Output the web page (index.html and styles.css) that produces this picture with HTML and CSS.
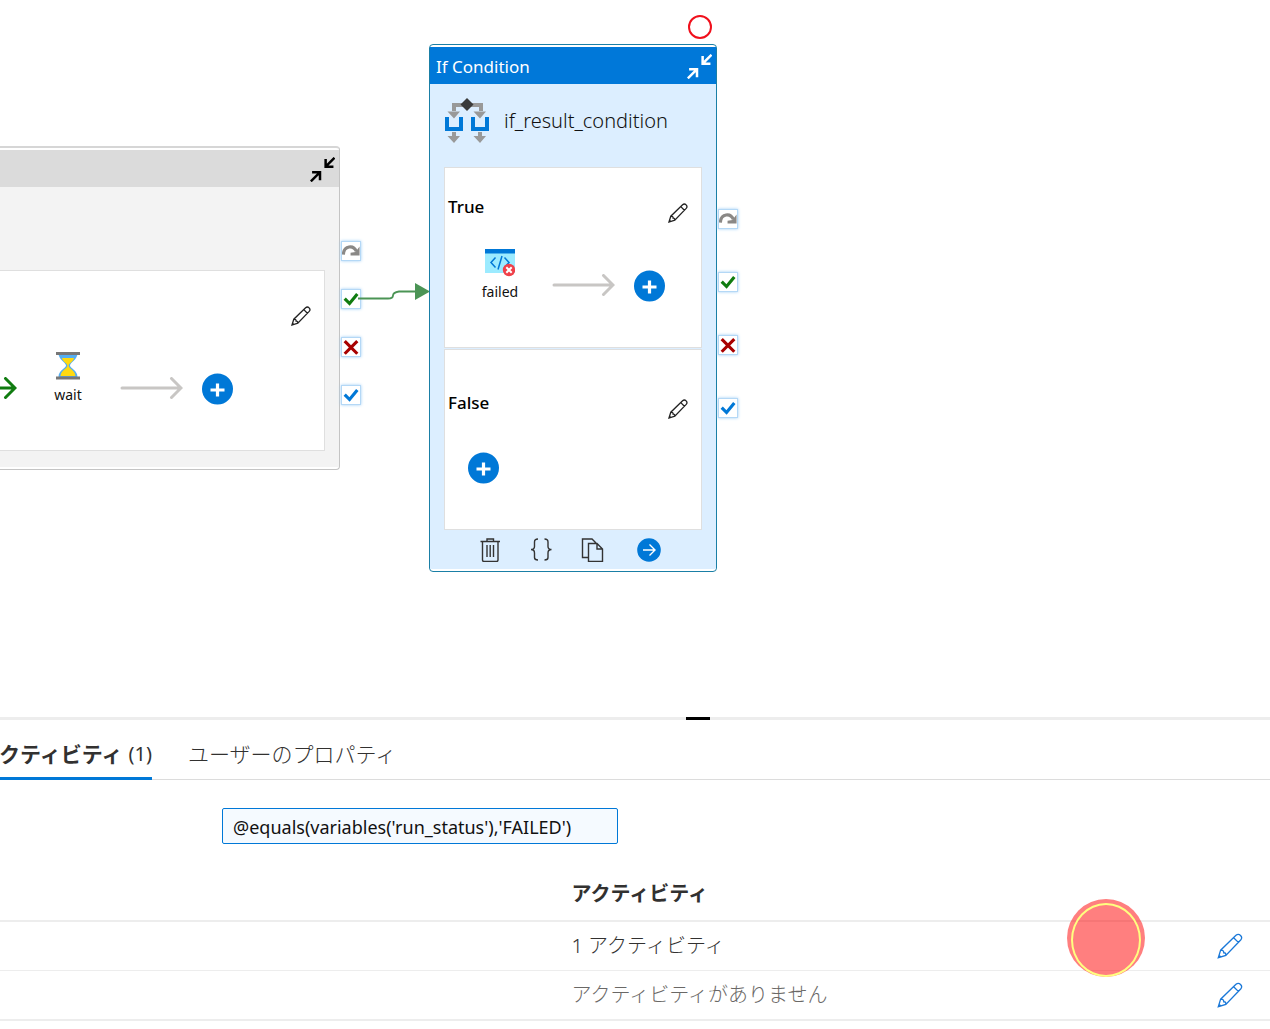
FILE: index.html
```html
<!DOCTYPE html>
<html lang="ja">
<head>
<meta charset="utf-8">
<meta name="viewport" content="width=device-width, initial-scale=1">
<title>if_result_condition</title>
<link rel="stylesheet" href="styles.css">
</head>
<body>
<svg class="symbols" aria-hidden="true">
  <symbol id="pencil" viewBox="0 0 20 20"><path d="M1 19 2.8 13.2 14.6 1.8Q16.4.2 18.1 1.9T18.2 5.4L6.8 17.2ZM2.8 13.2Q5.3 13.2 5.2 15.2 6.9 15 6.8 17.2M12.8 3.6 16.4 7.2M1 19 2.6 17.4"/></symbol>
  <symbol id="collapse" viewBox="0 0 24 24"><path d="M23.5.8 15 9.2M15 1.8V9.4H22.5M.8 23.4 9.2 15M2 14.6H9.6V22.4"/></symbol>
  <symbol id="plus" viewBox="0 0 32 32"><circle cx="15.500" cy="16" r="15.500" fill="#0078d7"/><path d="M15.500 10.500V23.500M8.500 17H22.500" stroke="#fff" stroke-width="3.2"/></symbol>
  <symbol id="arrow" viewBox="0 0 64 24"><path d="M3 11H61M52.5 1.5 62 11 52.5 20.5"/></symbol>
  <symbol id="skip" viewBox="0 0 20 20"><path d="M1.500 14C2 3.500 13 3 16 10.500" fill="none" stroke="#8a8886" stroke-width="3.500"/><path d="M19.500 5V15H9.500V12L15 11Z" fill="#8a8886"/></symbol>
  <symbol id="tick" viewBox="0 0 20 20"><path d="M3 9.500 8.400 15 17 4.500" fill="none" stroke-width="3.500"/></symbol>
  <symbol id="cross" viewBox="0 0 20 20"><path d="M3 3.500 17 17.500M17 3.500 3 17.500" fill="none" stroke="#a80000" stroke-width="3.500"/></symbol>
</svg>

<main class="canvas">
  <section class="node node-loop">
    <header class="node-head">
      <button class="icon-button" aria-label="折りたたむ"><svg class="collapse"><use href="#collapse"/></svg></button>
    </header>
    <div class="node-title"></div>
    <div class="branches">
      <div class="branch">
        <div class="branch-head">
          <button class="icon-button edit" aria-label="編集"><svg class="pencil"><use href="#pencil"/></svg></button>
        </div>
        <div class="steps steps-end">
          <svg class="arrow arrow-success"><use href="#arrow"/></svg>
          <div class="activity">
            <svg class="activity-icon" viewBox="0 2 30 30"><path d="M5.500 3H24.500C24.500 10 17 12.500 17 15.500S24.500 20 24.500 27H5.500C5.500 20 13 18.500 13 15.500S5.500 10 5.500 3Z" fill="#55aef2"/><path d="M9 8H21C20.500 11.500 16 13 15.600 15.500 15.700 19 22 20 22.500 26H7.500C8 20 14.300 19 14.400 15.500 14 13 9.500 11.500 9 8Z" fill="#ffd90f"/><path d="M3 3.500H27M3 28H27" stroke="#777" stroke-width="3"/></svg>
            <span>wait</span>
          </div>
          <svg class="arrow"><use href="#arrow"/></svg>
          <button class="icon-button" aria-label="追加"><svg class="plus"><use href="#plus"/></svg></button>
        </div>
      </div>
    </div>
    <div class="handles">
      <svg class="handle"><use href="#skip"/></svg>
      <svg class="handle success"><use href="#tick"/></svg>
      <svg class="handle"><use href="#cross"/></svg>
      <svg class="handle completion"><use href="#tick"/></svg>
    </div>
  </section>

  <svg class="connector" viewBox="0 0 72 20"><path d="M0 16.500H30Q35 16.500 35 13.500T41 9.500H58" fill="none" stroke="#4b9455" stroke-width="1.800"/><path d="M57 1V18L72 9.500Z" fill="#4b9455"/></svg>

  <section class="node node-if">
    <header class="node-head">
      <span>If Condition</span>
      <button class="icon-button" aria-label="折りたたむ"><svg class="collapse"><use href="#collapse"/></svg></button>
    </header>
    <div class="node-title">
      <svg class="if-icon" viewBox="0 0 44 46"><path d="M9 13V7H36V13" fill="none" stroke="#999" stroke-width="4"/><path d="M2.500 13.500H15L9 20.500ZM28.500 13.500H41L35 20.500ZM7 34H11V38H15L9 45 2.500 38H7ZM33 34H37V38H41L35 45 28.500 38H33Z" fill="#999"/><path d="M2 19V31H16V19M28 19V31H42V19" fill="none" stroke="#0078d7" stroke-width="4"/><path d="M22 0 28.500 6.500 22 13 15.500 6.500Z" fill="#3a3a3a"/></svg>
      <span>if_result_condition</span>
    </div>
    <div class="branches">
      <div class="branch">
        <div class="branch-head">
          <span>True</span>
          <button class="icon-button edit" aria-label="編集"><svg class="pencil"><use href="#pencil"/></svg></button>
        </div>
        <div class="steps">
          <div class="activity">
            <svg class="activity-icon" viewBox="0 0 30 30"><path d="M0 4H30V24H0Z" fill="#9cebff"/><path d="M0 0H30V4.500H0Z" fill="#0078d7"/><path d="M10.500 8.500 6 13.500 10.500 18.500M19.500 8.500 24 13.500 19.500 18.500M17 7 13 20.500" fill="none" stroke="#0078d7" stroke-width="1.500"/><circle cx="24" cy="21" r="6.200" fill="#f04049"/><path d="M21.300 18.300 26.700 23.700M26.700 18.300 21.300 23.700" stroke="#fff" stroke-width="2"/></svg>
            <span>failed</span>
          </div>
          <svg class="arrow"><use href="#arrow"/></svg>
          <button class="icon-button" aria-label="追加"><svg class="plus"><use href="#plus"/></svg></button>
        </div>
      </div>
      <div class="branch branch-false">
        <div class="branch-head">
          <span>False</span>
          <button class="icon-button edit" aria-label="編集"><svg class="pencil"><use href="#pencil"/></svg></button>
        </div>
        <div class="steps">
          <button class="icon-button" aria-label="追加"><svg class="plus"><use href="#plus"/></svg></button>
        </div>
      </div>
    </div>
    <footer class="actions">
      <button class="icon-button" aria-label="削除"><svg class="action" viewBox="0 0 24 24"><path d="M2.500 3.500H22M9 3.500V1H15.500V3.500M4.500 3.500V22Q4.500 23.500 6 23.500H18.500Q20 23.500 20 22V3.500M9 7V19M12.200 7V19M15.500 7V19"/></svg></button>
      <button class="icon-button" aria-label="コード"><svg class="action" viewBox="0 0 24 24"><path d="M9 1Q5.500 1 5.500 4V8.500Q5.500 11.500 2 11.500 5.500 11.500 5.500 15V19.500Q5.500 22 9 22M15.500 1Q19 1 19 4V8.500Q19 11.500 22.500 11.500 19 11.500 19 15V19.500Q19 22 15.500 22"/></svg></button>
      <button class="icon-button" aria-label="複製"><svg class="action" viewBox="0 0 24 24"><path d="M8.500 19.500H2.500V1H12L16 5M8.500 5.500H17L22.500 11V23.500H8.500ZM17 5.500V11H22.500"/></svg></button>
      <button class="icon-button go" aria-label="出力の追加"><svg class="action" viewBox="0 0 24 24"><circle cx="12" cy="12" r="11.800" fill="#0078d7" stroke="none"/><path d="M6 12H18M12.500 6.500 18 12 12.500 17.500" stroke="#fff"/></svg></button>
    </footer>
    <div class="handles">
      <svg class="handle"><use href="#skip"/></svg>
      <svg class="handle success"><use href="#tick"/></svg>
      <svg class="handle"><use href="#cross"/></svg>
      <svg class="handle completion"><use href="#tick"/></svg>
    </div>
    <span class="breakpoint"></span>
  </section>
</main>

<section class="panel">
  <div class="splitter"><div class="grip"></div></div>
  <nav class="tabs">
    <a class="tab active" href="#activities">アクティビティ <span class="count">(1)</span></a>
    <a class="tab" href="#properties">ユーザーのプロパティ</a>
  </nav>
  <div class="expression">
    <input type="text" aria-label="式" value="@equals(variables('run_status'),'FAILED')">
  </div>
  <table class="cases" id="activities">
    <thead>
      <tr><th class="case"></th><th>アクティビティ</th><th class="tools"></th></tr>
    </thead>
    <tbody>
      <tr><td></td><td>1 アクティビティ</td><td><button class="icon-button" aria-label="編集"><svg class="pencil pencil-blue"><use href="#pencil"/></svg></button></td></tr>
      <tr><td></td><td class="muted">アクティビティがありません</td><td><button class="icon-button" aria-label="編集"><svg class="pencil pencil-blue"><use href="#pencil"/></svg></button></td></tr>
    </tbody>
  </table>
  <div class="click-marker"></div>
</section>
</body>
</html>
```
FILE: styles.css
```css
* { box-sizing: border-box; }

body {
  margin: 0;
  min-height: 100vh;
  display: flex;
  flex-direction: column;
  overflow-x: hidden;
  background: #fff;
  color: #323130;
  font: 20px/24px "Noto Sans", "Noto Sans CJK JP", sans-serif;
}

svg { display: block; flex: none; }
.symbols { position: absolute; width: 0; height: 0; }

.icon-button {
  display: block;
  padding: 0;
  border: 0;
  background: none;
  color: inherit;
  cursor: pointer;
}

/* Canvas */
.canvas {
  position: relative;
  flex: 1;
  min-height: 600px;
  overflow: hidden;
  color: #111;
}

.node {
  position: absolute;
  padding: 2px 0;
  border: 1px solid #1a7fa6;
  border-radius: 4px;
  background: #fff;
}
.node-loop {
  top: 146px;
  left: -260px;
  width: 600px;
  border: 1px solid #c4c4c4;
  border-top: 2px solid #d6d6d6;
}
.node-if { top: 44px; left: 429px; width: 288px; }

.node-head {
  display: flex;
  align-items: center;
  justify-content: space-between;
  height: 37px;
  padding: 2px 4px 0 6px;
  background: #0078d9;
  color: #fff;
  font-size: 17px;
}
.node-head .icon-button { margin-left: auto; }
.node-loop .node-head { background: #dbdbdb; color: #000; }

.node-title {
  display: flex;
  align-items: center;
  gap: 15px;
  height: 83px;
  padding: 0 15px 9px;
  background: #dceeff;
  font-weight: 300;
}
.node-loop .node-title { background: #f3f3f3; }

.branches {
  display: grid;
  gap: 1px;
  padding: 0 14px;
  background: #dceeff;
}
.node-loop .branches { padding-bottom: 16px; background: #f3f3f3; }

.branch { height: 181px; border: 1px solid #dfdfdf; background: #fff; }
.branch-head {
  display: flex;
  align-items: flex-start;
  height: 67px;
  padding: 27px 13px 0 3px;
  color: #000;
  font-size: 17px;
  font-weight: 500;
}
.branch-false .branch-head { padding-top: 41px; }
.edit { margin: 8px 0 0 auto; }

.steps {
  display: flex;
  align-items: center;
  gap: 19px;
  height: 102px;
  padding-left: 23px;
}
.steps-end { justify-content: flex-end; padding-right: 90px; }

.activity {
  display: flex;
  flex-direction: column;
  align-items: center;
  align-self: flex-start;
  gap: 3px;
  width: 64px;
  padding-top: 14px;
  font-size: 14px;
  line-height: 20px;
}
.activity-icon { width: 30px; height: 30px; }

.collapse { width: 25px; height: 25px; fill: none; stroke: currentColor; stroke-width: 2.4; }
.pencil { width: 20px; height: 20px; fill: none; stroke: #222; stroke-width: 1.3; }
.plus { width: 32px; height: 32px; }
.arrow { width: 64px; height: 24px; fill: none; stroke: #c8c6c4; stroke-width: 3; stroke-linecap: round; }
.arrow-success { stroke: #107c10; }
.if-icon { width: 44px; height: 46px; }

.actions {
  display: flex;
  align-items: center;
  gap: 27px;
  height: 39px;
  padding-left: 48px;
  background: #dceeff;
}
.action { width: 24px; height: 24px; fill: none; stroke: #333; stroke-width: 1.4; }
.go { margin-left: 6px; }

.handles {
  position: absolute;
  top: 164px;
  left: 100%;
  display: flex;
  flex-direction: column;
  gap: 43px;
}
.node-loop .handles { top: 93px; gap: 28px; }
.handle {
  width: 20px;
  height: 20px;
  margin-left: 2px;
  border: 1px solid #b4d8f6;
  background: #fff;
  box-shadow: 0 0 3px #9dcdf5;
}
.success { stroke: #107c10; }
.completion { stroke: #0078d7; }

.connector { position: absolute; top: 282px; left: 358px; width: 72px; height: 20px; }

.breakpoint {
  position: absolute;
  top: -30px;
  right: 4px;
  width: 24px;
  height: 24px;
  border: 2px solid #f0101c;
  border-radius: 50%;
}

/* Properties panel */
.panel { position: relative; padding-bottom: 8px; }
.splitter { height: 3px; background: #ededed; }
.grip { width: 24px; height: 3px; margin-left: 54%; background: #000; }

.tabs {
  display: flex;
  gap: 36px;
  height: 60px;
  margin-left: -24px;
  border-bottom: 1px solid #dcdcdc;
}
.tab {
  height: 60px;
  color: inherit;
  font-size: 21px;
  font-weight: 300;
  line-height: 68px;
  text-decoration: none;
  white-space: nowrap;
}
.active {
  width: 176px;
  border-bottom: 3px solid #0078d7;
  font-weight: 700;
  direction: ltr;
  display: flex;
  justify-content: flex-end;
  gap: 6px;
}
.count { font-size: 20px; font-weight: 400; }

.expression { padding: 28px 0 0 222px; }
.expression input {
  display: block;
  width: 396px;
  height: 36px;
  padding: 2px 10px 0;
  border: 1px solid #0078d7;
  border-radius: 2px;
  background: #f5faff;
  color: #111;
  font: inherit;
  font-size: 18px;
}

.cases {
  width: 100%;
  margin-top: 22px;
  border-collapse: separate;
  border-spacing: 0;
  table-layout: fixed;
  text-align: left;
}
.cases th, .cases td { height: 49px; padding: 0; border-bottom: 1px solid #ededed; font-weight: 300; }
.cases th { height: 56px; padding-top: 2px; border-bottom-width: 2px; font-weight: 700; }
.cases tr:last-child td { height: 50px; }
.cases tbody tr:last-child td { border-bottom-width: 2px; }
.cases thead tr:last-child th { border-bottom-width: 2px; }
.case { width: 45%; }
.tools { width: 53px; }
.cases .muted { color: #6a6866; }
.pencil-blue { width: 26px; height: 26px; stroke: #1a78d8; stroke-width: 1; }

.click-marker {
  position: absolute;
  right: 125px;
  bottom: 52px;
  width: 78px;
  height: 78px;
  padding: 4px;
  border-radius: 50%;
  background: rgba(255, 0, 0, .5);
  pointer-events: none;
}
.click-marker::before {
  content: "";
  display: block;
  height: 100%;
  border: 2px solid #ffff80;
  border-radius: 50%;
}
```
